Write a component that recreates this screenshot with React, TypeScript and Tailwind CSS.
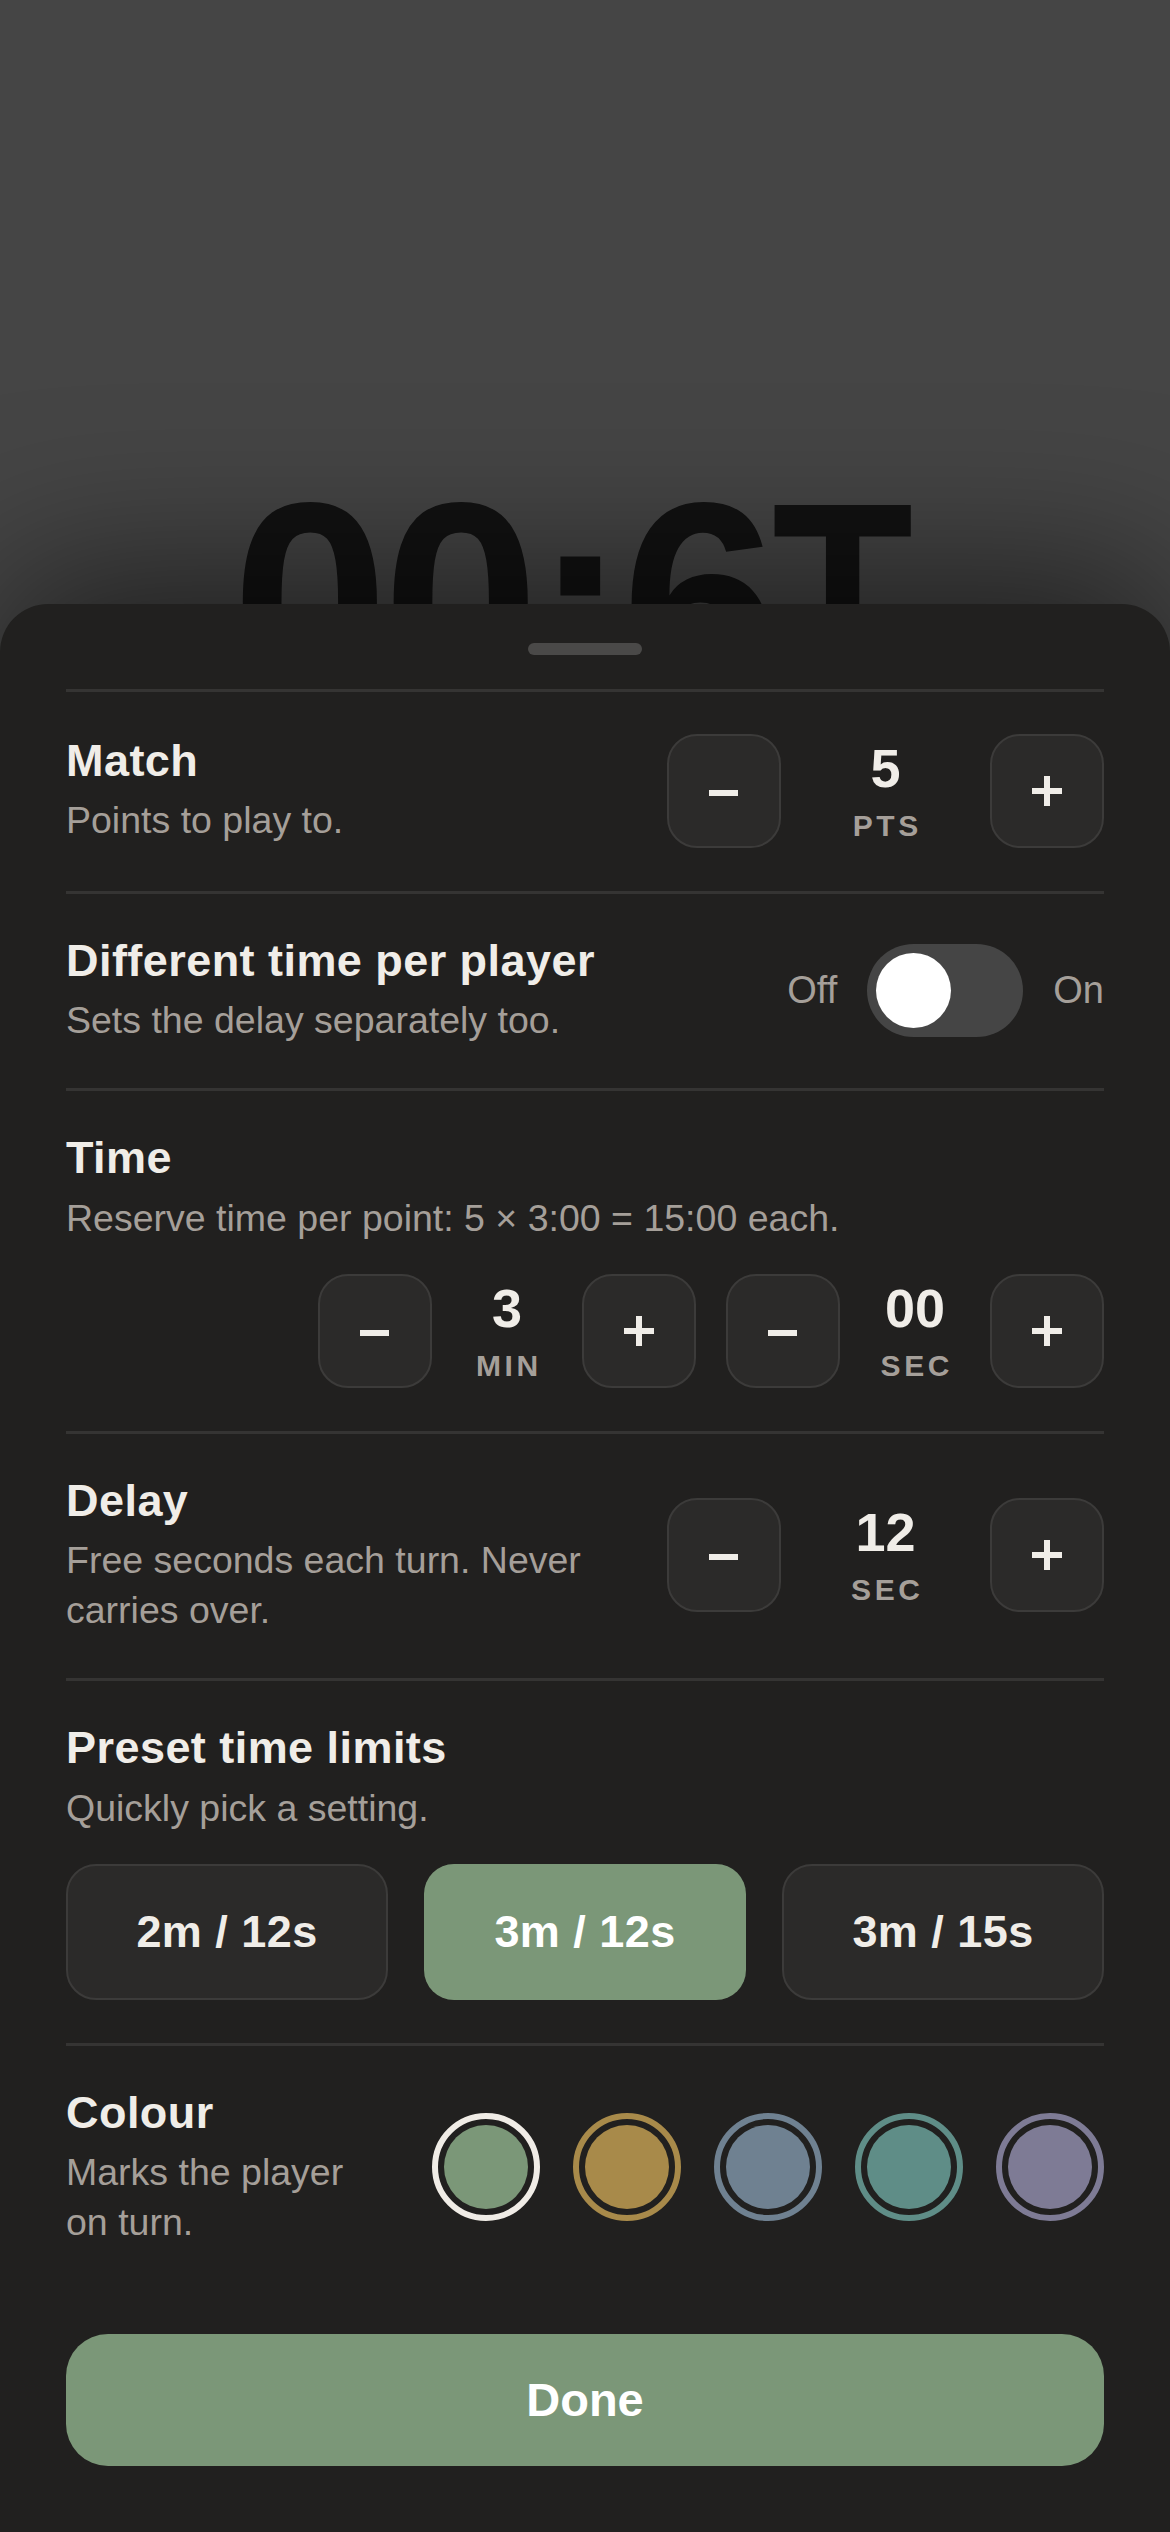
import React from 'react';

type StepperProps = { value: string; unit: string; wide?: boolean };

const MinusIcon = () => (
  <svg width="30" height="30" viewBox="0 0 30 30" fill="currentColor">
    <rect x="0" y="14" width="29" height="6" />
  </svg>
);

const PlusIcon = () => (
  <svg width="30" height="30" viewBox="0 0 30 30" fill="currentColor">
    <rect x="0" y="12" width="30" height="6" />
    <rect x="12" y="0" width="6" height="30" />
  </svg>
);

const StepButton = ({ children }: { children: React.ReactNode }) => (
  <button className="flex h-[114px] w-[114px] shrink-0 items-center justify-center rounded-[30px] border-2 border-[#3c3b3a] bg-[#2b2a29] text-[#f0ede8]">
    {children}
  </button>
);

const Stepper = ({ value, unit, wide }: StepperProps) => (
  <div className="flex items-center">
    <StepButton>
      <MinusIcon />
    </StepButton>
    <div className={`flex flex-col items-center ${wide ? 'w-[209px]' : 'w-[150px]'}`}>
      <span className="text-[54px] font-bold leading-none text-[#f0ede8]">{value}</span>
      <span className="mt-[16px] pl-[0.12em] text-[30px] font-bold leading-none tracking-[0.12em] text-[#a59f99]">
        {unit}
      </span>
    </div>
    <StepButton>
      <PlusIcon />
    </StepButton>
  </div>
);

const Heading = ({ title, sub }: { title: string; sub: string }) => (
  <div>
    <h2 className="text-[45px] font-bold leading-[1.1] tracking-[0.01em] text-[#f0ede8]">{title}</h2>
    <p className="mt-[10px] text-[37.5px] leading-[50px] text-[#a59f99]">{sub}</p>
  </div>
);

const Section = ({ children }: { children: React.ReactNode }) => (
  <section className="border-t-[3px] border-[#353433] pt-[42px] pb-[43px]">{children}</section>
);

const presets = ['2m / 12s', '3m / 12s', '3m / 15s'];

const swatches = [
  { fill: 'bg-[#7b9778]', ring: 'border-[#f0ece6]' },
  { fill: 'bg-[#a88a4a]', ring: 'border-[#a88a4a]' },
  { fill: 'bg-[#6f8191]', ring: 'border-[#6f8191]' },
  { fill: 'bg-[#5f8d87]', ring: 'border-[#5f8d87]' },
  { fill: 'bg-[#7e7b95]', ring: 'border-[#7e7b95]' },
];

export default function App() {
  return (
    <div className="relative h-[2532px] w-full overflow-hidden bg-[#454545] font-['Liberation_Sans',Arial,sans-serif]">
      {/* clock behind the sheet */}
      <div className="pt-[461px] text-center text-[282px] font-bold leading-none tracking-[-6px] text-[#121212]">
        00:6<span className="inline-block origin-left scale-x-[0.82]">T</span>
      </div>

      {/* settings sheet */}
      <div className="absolute inset-x-0 bottom-0 rounded-t-[48px] bg-[#21201f] px-[66px] pt-[39px] pb-[66px] shadow-[0_-30px_160px_rgba(0,0,0,0.55)]">
        <div className="mx-auto h-[12px] w-[114px] rounded-full bg-[#4a4948]" />
        <div className="mt-[34px]">
          <Section>
            <div className="flex items-center justify-between">
              <Heading title="Match" sub="Points to play to." />
              <Stepper value="5" unit="PTS" wide />
            </div>
          </Section>

          <Section>
            <div className="flex items-center justify-between">
              <Heading title="Different time per player" sub="Sets the delay separately too." />
              <div className="flex items-center gap-[30px] text-[38px] text-[#a59f99]">
                <span>Off</span>
                <div className="flex h-[93px] w-[156px] items-center rounded-full bg-[#454545] px-[9px]">
                  <div className="h-[75px] w-[75px] rounded-full bg-white" />
                </div>
                <span>On</span>
              </div>
            </div>
          </Section>

          <Section>
            <Heading title="Time" sub="Reserve time per point: 5 × 3:00 = 15:00 each." />
            <div className="mt-[31px] flex justify-end gap-[30px]">
              <Stepper value="3" unit="MIN" />
              <Stepper value="00" unit="SEC" />
            </div>
          </Section>

          <Section>
            <div className="flex items-center justify-between">
              <div className="w-[560px]">
                <Heading title="Delay" sub="Free seconds each turn. Never carries over." />
              </div>
              <Stepper value="12" unit="SEC" wide />
            </div>
          </Section>

          <Section>
            <Heading title="Preset time limits" sub="Quickly pick a setting." />
            <div className="mt-[31px] grid grid-cols-3 gap-[36px]">
              {presets.map((p, i) => (
                <button
                  key={p}
                  className={
                    i === 1
                      ? 'h-[136px] rounded-[30px] bg-[#7b9778] text-[45px] font-bold tracking-[0.01em] text-white'
                      : 'h-[136px] rounded-[30px] border-2 border-[#3c3b3a] bg-[#2b2a29] text-[45px] font-bold tracking-[0.01em] text-[#f0ede8]'
                  }
                >
                  {p}
                </button>
              ))}
            </div>
          </Section>

          <section className="border-t-[3px] border-[#353433] pt-[42px] pb-[42px]">
            <div className="flex items-center justify-between">
              <div className="w-[300px]">
                <Heading title="Colour" sub="Marks the player on turn." />
              </div>
              <div className="flex gap-[33px]">
                {swatches.map((s, i) => (
                  <div key={i} className={`h-[108px] w-[108px] rounded-full border-[6px] p-[6px] ${s.ring}`}>
                    <div className={`h-full w-full rounded-full ${s.fill}`} />
                  </div>
                ))}
              </div>
            </div>
          </section>
        </div>

        <button className="mt-[45px] flex h-[132px] w-full items-center justify-center rounded-[42px] bg-[#7b9778] text-[47px] font-bold text-white">
          Done
        </button>
      </div>
    </div>
  );
}
